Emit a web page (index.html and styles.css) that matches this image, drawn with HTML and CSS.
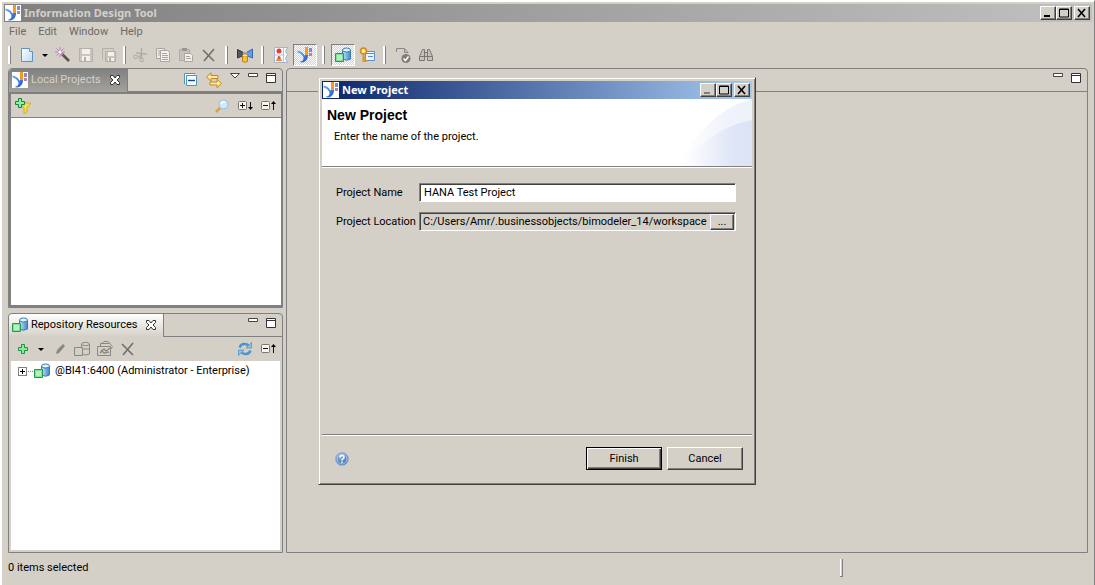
FILE: index.html
```html
<!DOCTYPE html>
<html lang="en">
<head>
    <meta charset="UTF-8">
    <meta name="viewport" content="width=device-width, initial-scale=1.0">
    <title>Information Design Tool</title>
    <link rel="stylesheet" href="styles.css">
</head>
<body>
    <svg class="sprites" aria-hidden="true">
        <defs>
            <linearGradient id="g-blue" x1="0" y1="0" x2="1" y2="0">
                <stop offset="0" stop-color="#c4e4fa"/>
                <stop offset="1" stop-color="#3f86cc"/>
            </linearGradient>
            <linearGradient id="g-page" x1="0" y1="0" x2="1" y2="1">
                <stop offset="0" stop-color="#fff"/>
                <stop offset="1" stop-color="#b9dcf5"/>
            </linearGradient>
            <linearGradient id="g-logo" x1="0" y1="0" x2="1" y2="1">
                <stop offset="0" stop-color="#6fb8f5"/>
                <stop offset="1" stop-color="#1b4fd0"/>
            </linearGradient>
            <radialGradient id="g-help" cx="0.4" cy="0.3" r="0.8">
                <stop offset="0" stop-color="#8fb6e0"/>
                <stop offset="1" stop-color="#2f629f"/>
            </radialGradient>
        </defs>
        <symbol id="i-logo" viewBox="0 0 16 16">
            <path d="M0.500 3.500Q5 4 7.500 8.500L11 6.500Q11.500 12 8 14.500Q5.500 16 2.500 15Q7 14 6.500 10.500Q5 6.500 0.500 5.500z" fill="url(#g-logo)"/>
            <rect x="8" y="0" width="3" height="8" fill="#f39a25"/>
            <rect x="12" y="1" width="3" height="4" fill="#8a86c8"/>
            <rect x="12" y="6" width="3" height="3" fill="#b583a8"/>
        </symbol>
        <symbol id="i-new" viewBox="0 0 16 16">
            <path d="M2.500 1.500h8l3 3v10h-11z" fill="url(#g-page)" stroke="#5b94cb"/>
            <path d="M10.500 1.500v3h3" fill="#fff" stroke="#5b94cb"/>
        </symbol>
        <symbol id="i-wand" viewBox="0 0 16 16">
            <path d="M7 7l7 7" stroke="#55504e" stroke-width="2.600"/>
            <path d="M5 0v10M0 5h10M1.500 1.500l7 7M8.500 1.500l-7 7" stroke="#c57dc0"/>
            <circle cx="5" cy="5" r="1.500" fill="#fff"/>
        </symbol>
        <symbol id="i-save" viewBox="0 0 16 16">
            <path d="M1.500 1.500h13v13h-13z" fill="#c9c6c0" stroke="#b3b0a9"/>
            <path d="M4 2h8v5H4zM4 9h8v5H4z" fill="#f3f1ed"/>
            <path d="M6 10h2v4H6z" fill="#b3b0a9"/>
        </symbol>
        <symbol id="i-saveall" viewBox="0 0 16 16">
            <path d="M4.500 4.500h10v10h-10z" fill="#c9c6c0" stroke="#b3b0a9"/>
            <path d="M1.500 12.500v-11h11v2" fill="none" stroke="#b3b0a9"/>
            <path d="M7 5h6v4H7zM7 11h6v3H7z" fill="#f3f1ed"/>
            <path d="M8 11h2v3H8z" fill="#b3b0a9"/>
        </symbol>
        <symbol id="i-cut" viewBox="0 0 16 16">
            <path d="M9.500 1v8M4 6l11 1M9 8l-3 3M9 9l1 3" stroke="#b0ada6" stroke-width="1.400"/>
            <path d="M2 8l4 1-2 3-2-1zM8 11l3 0 0 4-3-1z" fill="none" stroke="#b0ada6"/>
        </symbol>
        <symbol id="i-copy" viewBox="0 0 16 16">
            <path d="M1.500 1.500h8v10h-8z" fill="#eeece8" stroke="#a9a6a0"/>
            <path d="M5.500 3.500h7l2 2v9h-9z" fill="#f3f1ee" stroke="#a9a6a0"/>
            <path d="M3 4h2M3 6h2M3 8h2M7 6.500h5M7 8.500h6M7 10.500h6M7 12.500h6" stroke="#a9a6a0"/>
        </symbol>
        <symbol id="i-paste" viewBox="0 0 16 16">
            <path d="M1.500 2.500h10v11h-10z" fill="#c5c2bc" stroke="#b0ada6"/>
            <path d="M4 1h5v3H4z" fill="#99968f"/>
            <path d="M6.500 6.500h6l2 2v6h-8z" fill="#f3f1ee" stroke="#a9a6a0"/>
            <path d="M8 9.500h4M8 11.500h5" stroke="#a9a6a0"/>
        </symbol>
        <symbol id="i-x" viewBox="0 0 16 16">
            <path d="M2 3l11 11M13 2L3 14" stroke="#716f6b" stroke-width="1.600" fill="none"/>
        </symbol>
        <symbol id="i-dbs" viewBox="0 0 16 16">
            <path d="M0.500 2.500l6 3v3l-6 2.500z" fill="#555963" stroke="#33363f"/>
            <path d="M9.500 5.500l6-3.500v9l-6-2.500z" fill="#6b9ae4" stroke="#3566ae"/>
            <path d="M6 5h4v4H6z" fill="#9aa6b5"/>
            <path d="M5.500 8.500v6q2.500 1.600 5 0v-6z" fill="#fbc32c" stroke="#b98214"/>
            <ellipse cx="8" cy="8.500" rx="2.500" ry="1.500" fill="#ffe889" stroke="#b98214" stroke-width="0.700"/>
        </symbol>
        <symbol id="i-models" viewBox="0 0 16 16">
            <path d="M1.500 0.500h13l-2 4 2 3-2 4 2 4h-13z" fill="#f8fafd" stroke="#a3b4cc"/>
            <path d="M1.500 8h10M10.500 1v14" stroke="#b9c5d8"/>
            <circle cx="6" cy="4" r="2.500" fill="#df3e3a"/>
            <path d="M2.500 14l3.500-5 3.500 5z" fill="#ee8c3d"/>
            <circle cx="6" cy="10.500" r="1.500" fill="#e1553f"/>
        </symbol>
        <symbol id="i-repo" viewBox="0 0 16 16">
            <path d="M7.500 3v9q4 2.500 8 0V3z" fill="url(#g-blue)" stroke="#3e78ab"/>
            <ellipse cx="11.500" cy="3" rx="4" ry="2" fill="#dff2fd" stroke="#3e78ab"/>
            <path d="M0.500 6.500h8v8h-8z" fill="#7fe096" stroke="#219c4b"/>
            <path d="M2 8h5v5H2z" fill="#b4f0c2"/>
        </symbol>
        <symbol id="i-repo-off" viewBox="0 0 16 16">
            <path d="M7.500 3v10q4 2 8 0V3M8.500 8h7" fill="none" stroke="#8b8882"/>
            <ellipse cx="11.500" cy="3" rx="4" ry="1.600" fill="none" stroke="#8b8882"/>
            <path d="M0.500 6.500h8v8h-8z" fill="#d4d0c8" stroke="#8b8882"/>
        </symbol>
        <symbol id="i-key" viewBox="0 0 16 16">
            <path d="M6.500 4.500h9v9h-9z" fill="#eaf4fd" stroke="#5d90c5"/>
            <path d="M7 6.500h8M9 9.500h5" stroke="#5d90c5"/>
            <circle cx="4.500" cy="4" r="3" fill="#ffd77b" stroke="#d08a26" stroke-width="1.500"/>
            <path d="M4.500 7v8M5 11h2M5 14h3" stroke="#db962b" stroke-width="2"/>
            <circle cx="4.500" cy="4" r="1" fill="#fff"/>
        </symbol>
        <symbol id="i-check" viewBox="0 0 16 16">
            <path d="M1.500 5V1.500h8l3 3.500M9.500 2v3.500h4" fill="none" stroke="#8b8882"/>
            <circle cx="11" cy="11.500" r="4.500" fill="#807d78"/>
            <path d="M8.500 11.500l2 2 3-4" fill="none" stroke="#fff" stroke-width="1.500"/>
        </symbol>
        <symbol id="i-find" viewBox="0 0 16 16">
            <path d="M4.500 2.500h2v3h3v-3h2l3 7v4h-5v-4h-3v4h-5v-4zM1.500 9.500h5M9.500 9.500h5M6.500 5v5M9.500 5v5" fill="#c5c2bc" stroke="#7a7772"/>
        </symbol>
        <symbol id="i-collapse" viewBox="0 0 16 16">
            <path d="M1.500 12V1.500H12M3.500 3.500h10v10h-10z" fill="#f4fafe" stroke="#5691b9"/>
            <path d="M5 8.500h7" stroke="#174b85" stroke-width="1.400"/>
        </symbol>
        <symbol id="i-link" viewBox="0 0 16 16">
            <path d="M0.500 5L5 0.800v2.700h7v3H5v2.700zM15.500 11.500L11 7.300V10H4v3h7v2.700z" fill="#ffe8a0" stroke="#c18923"/>
        </symbol>
        <symbol id="i-filter" viewBox="0 0 16 16">
            <path d="M5 5h11l-4 5v4l-3 2v-6z" fill="#f5e04a" stroke="#cfae25"/>
            <path d="M3.500 0.500h3v3h3v3h-3v3h-3v-3h-3v-3h3z" fill="#8ff0a0" stroke="#15823d"/>
        </symbol>
        <symbol id="i-search" viewBox="0 0 16 16">
            <path d="M6 10l-4 4" stroke="#dba04c" stroke-width="2.500"/>
            <circle cx="9.500" cy="6.500" r="4.500" fill="#cfeaff" stroke="#8fbce4"/>
            <path d="M7 6q1-3 4-2" fill="none" stroke="#fff" stroke-width="1.500"/>
        </symbol>
        <symbol id="i-expand" viewBox="0 0 16 16">
            <rect x="1.500" y="3.500" width="8" height="8" rx="1" fill="#f6f4ef" stroke="#77756f"/>
            <path d="M3 7.500h5M5.500 5v5M13.500 4v7" stroke="#111"/>
            <path d="M11 9h5l-2.500 3z"/>
        </symbol>
        <symbol id="i-shrink" viewBox="0 0 16 16">
            <rect x="1.500" y="3.500" width="8" height="8" rx="1" fill="#f6f4ef" stroke="#77756f"/>
            <path d="M3 7.500h5M13.500 5v7" stroke="#111"/>
            <path d="M11 6h5l-2.500-3z"/>
        </symbol>
        <symbol id="i-add" viewBox="0 0 16 16">
            <path d="M6.500 3.500h3v3h3v3h-3v3h-3v-3h-3v-3h3z" fill="#86eb9b" stroke="#1d9346"/>
        </symbol>
        <symbol id="i-pencil" viewBox="0 0 16 16">
            <path d="M4 13l1-4 6-6 2 2-6 7z" fill="#8b8882"/>
        </symbol>
        <symbol id="i-case" viewBox="0 0 16 16">
            <path d="M0.500 5.500h13v9h-13zM3.500 5.500v-3h9l3 3-2 3M5 2.500l2-2h4l2 2" fill="none" stroke="#8b8882"/>
            <path d="M3 12l4-4 2 2 4-3M4 9l3 3 5-1" fill="none" stroke="#8b8882" stroke-width="1.300"/>
        </symbol>
        <symbol id="i-refresh" viewBox="0 0 16 16">
            <path d="M2.500 6.500Q4 2.500 8 3q2 0 4 2M13.500 9.500Q12 13.500 8 13q-2 0-4-2" fill="none" stroke="#4b94d0" stroke-width="2.400"/>
            <path d="M9 7h5.500V1.500zM7 9H1.500v5.500z" fill="#8ac4ec" stroke="#4b94d0" stroke-width="0.800"/>
        </symbol>
        <symbol id="i-close" viewBox="0 0 12 12">
            <path d="M1.500 1.500h2.500l2 2.500 2-2.500h2.500v2l-2.500 2.500 2.500 2.500v2h-2.500l-2-2.500-2 2.500h-2.500v-2l2.500-2.500-2.500-2.500z" fill="#fff" stroke="#333"/>
        </symbol>
        <symbol id="i-menu" viewBox="0 0 12 12">
            <path d="M1.500 1.500h9L6 6z" fill="#fff" stroke="#444"/>
        </symbol>
        <symbol id="i-min" viewBox="0 0 12 12">
            <path d="M1.500 1.500h9v3h-9z" fill="#fff" stroke="#444"/>
        </symbol>
        <symbol id="i-max" viewBox="0 0 12 12">
            <path d="M1.500 1.500h9v9h-9zM1.500 3.500h9" fill="#fff" stroke="#333"/>
        </symbol>
        <symbol id="w-min" viewBox="0 0 12 10"><path d="M2 7h6v2H2z"/></symbol>
        <symbol id="w-max" viewBox="0 0 12 10"><path d="M1.500 1h9v8h-9zM1 1.500h10" fill="none" stroke="currentColor"/></symbol>
        <symbol id="w-close" viewBox="0 0 12 10"><path d="M2 1l7 8M9 1L2 9" stroke="currentColor" stroke-width="1.600"/></symbol>
        <symbol id="i-help" viewBox="0 0 16 16">
            <circle cx="8" cy="8" r="6.500" fill="url(#g-help)" stroke="#9cb5d1"/>
            <circle cx="8" cy="8" r="5" fill="none" stroke="#c9dbee" stroke-width="0.800"/>
            <path d="M6 6.500q0-2 2-2t2 1.800q0 1-1 1.500T8 9.500M8 10.500v1.500" fill="none" stroke="#fff" stroke-width="1.500"/>
        </symbol>
    </svg>

    <div class="window">
        <header class="titlebar">
            <svg class="icon logo"><use href="#i-logo"/></svg>
            <h1>Information Design Tool</h1>
            <div class="caption-buttons">
                <button aria-label="Minimize"><svg><use href="#w-min"/></svg></button>
                <button aria-label="Maximize"><svg><use href="#w-max"/></svg></button>
                <button aria-label="Close"><svg><use href="#w-close"/></svg></button>
            </div>
        </header>

        <nav class="menubar">
            <button>File</button>
            <button>Edit</button>
            <button>Window</button>
            <button>Help</button>
        </nav>

        <div class="toolbar">
            <span class="sep first"></span>
            <button class="tool" aria-label="New"><svg class="icon"><use href="#i-new"/></svg></button>
            <button class="drop" aria-label="New options"></button>
            <button class="tool" aria-label="Wizard"><svg class="icon"><use href="#i-wand"/></svg></button>
            <button class="tool" aria-label="Save"><svg class="icon"><use href="#i-save"/></svg></button>
            <button class="tool" aria-label="Save all"><svg class="icon"><use href="#i-saveall"/></svg></button>
            <span class="sep small"></span>
            <button class="tool" aria-label="Cut"><svg class="icon"><use href="#i-cut"/></svg></button>
            <button class="tool" aria-label="Copy"><svg class="icon"><use href="#i-copy"/></svg></button>
            <button class="tool" aria-label="Paste"><svg class="icon"><use href="#i-paste"/></svg></button>
            <button class="tool" aria-label="Delete"><svg class="icon"><use href="#i-x"/></svg></button>
            <span class="sep"></span>
            <button class="tool" aria-label="Sources"><svg class="icon"><use href="#i-dbs"/></svg></button>
            <span class="sep"></span>
            <button class="tool" aria-label="Models"><svg class="icon"><use href="#i-models"/></svg></button>
            <button class="tool pressed" aria-label="Local projects"><svg class="icon"><use href="#i-logo"/></svg></button>
            <span class="sep"></span>
            <button class="tool pressed" aria-label="Repository resources"><svg class="icon"><use href="#i-repo"/></svg></button>
            <button class="tool" aria-label="Security"><svg class="icon"><use href="#i-key"/></svg></button>
            <span class="sep"></span>
            <button class="tool" aria-label="Check integrity"><svg class="icon"><use href="#i-check"/></svg></button>
            <button class="tool" aria-label="Find"><svg class="icon"><use href="#i-find"/></svg></button>
        </div>

        <main class="workbench">
            <div class="side">
                <section class="view active">
                    <div class="view-head">
                        <div class="tab">
                            <svg class="icon logo"><use href="#i-logo"/></svg>
                            <h2>Local Projects</h2>
                            <button class="mini" aria-label="Close view"><svg><use href="#i-close"/></svg></button>
                        </div>
                        <div class="view-tools">
                            <button class="tool" aria-label="Collapse all"><svg class="icon"><use href="#i-collapse"/></svg></button>
                            <button class="tool" aria-label="Link"><svg class="icon"><use href="#i-link"/></svg></button>
                            <div class="mini-buttons">
                                <button class="mini" aria-label="View menu"><svg><use href="#i-menu"/></svg></button>
                                <button class="mini" aria-label="Minimize view"><svg><use href="#i-min"/></svg></button>
                                <button class="mini" aria-label="Maximize view"><svg><use href="#i-max"/></svg></button>
                            </div>
                        </div>
                    </div>
                    <div class="view-body">
                        <div class="view-bar">
                            <button class="tool" aria-label="Add filter"><svg class="icon"><use href="#i-filter"/></svg></button>
                            <span class="space"></span>
                            <button class="tool" aria-label="Search"><svg class="icon"><use href="#i-search"/></svg></button>
                            <button class="tool" aria-label="Expand"><svg class="icon"><use href="#i-expand"/></svg></button>
                            <button class="tool" aria-label="Collapse"><svg class="icon"><use href="#i-shrink"/></svg></button>
                        </div>
                        <div class="content"></div>
                    </div>
                </section>

                <section class="view">
                    <div class="view-head">
                        <div class="tab">
                            <svg class="icon"><use href="#i-repo"/></svg>
                            <h2>Repository Resources</h2>
                            <button class="mini" aria-label="Close view"><svg><use href="#i-close"/></svg></button>
                        </div>
                        <div class="view-tools">
                            <div class="mini-buttons">
                                <button class="mini" aria-label="Minimize view"><svg><use href="#i-min"/></svg></button>
                                <button class="mini" aria-label="Maximize view"><svg><use href="#i-max"/></svg></button>
                            </div>
                        </div>
                    </div>
                    <div class="view-body">
                        <div class="view-bar">
                            <button class="tool" aria-label="Add"><svg class="icon"><use href="#i-add"/></svg></button>
                            <button class="drop" aria-label="Add options"></button>
                            <button class="tool pencil" aria-label="Edit"><svg class="icon"><use href="#i-pencil"/></svg></button>
                            <button class="tool" aria-label="Open session"><svg class="icon"><use href="#i-repo-off"/></svg></button>
                            <button class="tool" aria-label="Retrieve"><svg class="icon"><use href="#i-case"/></svg></button>
                            <button class="tool" aria-label="Delete"><svg class="icon"><use href="#i-x"/></svg></button>
                            <span class="space"></span>
                            <button class="tool" aria-label="Refresh"><svg class="icon"><use href="#i-refresh"/></svg></button>
                            <button class="tool" aria-label="Collapse"><svg class="icon"><use href="#i-shrink"/></svg></button>
                        </div>
                        <ul class="content tree">
                            <li>
                                <button class="twisty" aria-label="Expand"></button>
                                <svg class="icon"><use href="#i-repo"/></svg>
                                <span>@BI41:6400 (Administrator - Enterprise)</span>
                            </li>
                        </ul>
                    </div>
                </section>
            </div>

            <section class="editor">
                <div class="view-head">
                    <div class="view-tools">
                        <div class="mini-buttons">
                            <button class="mini" aria-label="Minimize editor"><svg><use href="#i-min"/></svg></button>
                            <button class="mini" aria-label="Maximize editor"><svg><use href="#i-max"/></svg></button>
                        </div>
                    </div>
                </div>
            </section>
        </main>

        <footer class="statusbar">
            <span class="status-text">0 items selected</span>
            <span class="status-sep"></span>
        </footer>
    </div>

    <form class="dialog" role="dialog" aria-labelledby="dialog-title">
        <div class="titlebar">
            <svg class="icon logo"><use href="#i-logo"/></svg>
            <h2 id="dialog-title">New Project</h2>
            <div class="caption-buttons">
                <button type="button" aria-label="Minimize" class="off"><svg><use href="#w-min"/></svg></button>
                <button type="button" aria-label="Maximize"><svg><use href="#w-max"/></svg></button>
                <button type="button" aria-label="Close"><svg><use href="#w-close"/></svg></button>
            </div>
        </div>
        <div class="banner">
            <div class="banner-text">
                <h3>New Project</h3>
                <p>Enter the name of the project.</p>
            </div>
            <svg class="swoosh" viewBox="0 0 72 67" aria-hidden="true">
                <defs>
                    <linearGradient id="g-swoosh" x1="0" y1="0" x2="1" y2="0">
                        <stop offset="0" stop-color="#fff"/>
                        <stop offset="0.700" stop-color="#dfe6f7"/>
                        <stop offset="1" stop-color="#dbe3f6"/>
                    </linearGradient>
                </defs>
                <path d="M0 67Q26 12 72 0v67z" fill="url(#g-swoosh)" opacity="0.500"/>
                <path d="M4 67Q28 30 72 21v46z" fill="url(#g-swoosh)"/>
            </svg>
        </div>
        <div class="fields">
            <label for="project-name">Project Name</label>
            <input type="text" id="project-name" value="HANA Test Project">
            <label for="project-location">Project Location</label>
            <div class="location">
                <input type="text" id="project-location" value="C:/Users/Amr/.businessobjects/bimodeler_14/workspace" readonly>
                <button type="button" aria-label="Browse">...</button>
            </div>
        </div>
        <div class="dialog-footer">
            <button type="button" class="help" aria-label="Help"><svg class="icon"><use href="#i-help"/></svg></button>
            <button type="button" class="push default">Finish</button>
            <button type="button" class="push">Cancel</button>
        </div>
    </form>
</body>
</html>
```

FILE: styles.css
```css
*, *::before {
    box-sizing: border-box;
}

body {
    margin: 0;
    background: #d4d0c8;
    color: #000;
    font-family: Tahoma, Roboto, sans-serif;
    font-size: 11px;
    line-height: 14px;
}

h1, h2, h3, p, ul {
    margin: 0;
    padding: 0;
    font-size: 11px;
}

button, input {
    font: inherit;
    color: inherit;
    margin: 0;
    padding: 0;
    border: 0;
    border-radius: 0;
    background: none;
}

svg {
    display: block;
}

.sprites {
    position: absolute;
    width: 0;
    height: 0;
}

.icon {
    width: 16px;
    height: 16px;
    flex: none;
}

.logo {
    background: #fff;
}

/* main window */
.window {
    display: flex;
    flex-direction: column;
    min-height: 100vh;
    padding: 2px 2px 0 2px;
    border: solid #fff;
    border-width: 1px 1px 0 2px;
    border-right-color: #808080;
    box-shadow: inset 0 1px #fff;
}

.titlebar {
    display: flex;
    align-items: center;
    gap: 3px;
    height: 18px;
    margin-top: 1px;
    padding: 0 2px 0 1px;
    background: linear-gradient(to right, #808080, #c0c0c0);
    color: #d4d0c8;
}

.titlebar h1, .titlebar h2 {
    flex: 1;
    font-family: Tahoma, "Noto Sans", sans-serif;
    font-weight: bold;
}

.caption-buttons {
    display: flex;
}

.caption-buttons button {
    width: 16px;
    height: 14px;
    padding: 1px;
    background: #d4d0c8;
    color: #000;
    border: 1px solid;
    border-color: #fff #404040 #404040 #fff;
    box-shadow: inset -1px -1px #808080;
}

.caption-buttons button:last-child {
    margin-left: 2px;
}

.caption-buttons svg {
    width: 12px;
    height: 10px;
}

.caption-buttons .off {
    color: #808080;
    fill: #808080;
}

.menubar {
    display: flex;
    gap: 12px;
    height: 20px;
    padding-left: 5px;
    color: #6b6965;
}

.toolbar {
    display: flex;
    align-items: center;
    height: 26px;
    padding-left: 4px;
}

.tool {
    display: flex;
    align-items: center;
    justify-content: center;
    width: 23px;
    height: 22px;
    flex: none;
}

.pressed {
    width: 24px;
    margin-left: 1px;
    border: 1px solid;
    border-color: #808080 #fff #fff #808080;
    background: repeating-conic-gradient(#fff 0 25%, #d4d0c8 0 50%) 0 0 / 2px 2px;
}

.drop {
    width: 13px;
    height: 22px;
}

.drop::before {
    content: "";
    display: block;
    width: 6px;
    margin: 0 auto;
    border: solid transparent;
    border-width: 3px 3px 0 3px;
    border-top-color: #000;
}

.sep {
    display: flex;
    justify-content: center;
    width: 13px;
}

.sep.first {
    width: 7px;
    justify-content: flex-start;
}

.sep.small {
    width: 8px;
}

.sep::before {
    content: "";
    width: 3px;
    height: 18px;
    background: #fff;
    border-right: 1px solid #808080;
}

/* views */
.workbench {
    flex: 1;
    display: flex;
    gap: 3px;
    padding: 0 4px 0 4px;
}

.side {
    display: flex;
    flex-direction: column;
    gap: 5px;
    width: 275px;
}

.view {
    flex: 1;
    display: flex;
    flex-direction: column;
    border: 1px solid #808080;
    border-radius: 4px 4px 0 0;
}

.view-head {
    display: flex;
    justify-content: space-between;
    height: 23px;
    border-bottom: 1px solid #808080;
}

.tab {
    display: flex;
    align-items: center;
    gap: 3px;
    height: 23px;
    padding: 0 6px 1px 3px;
    border-right: 1px solid #808080;
    border-radius: 4px 0 0 0;
    background: linear-gradient(#fff, #d4d0c8);
}

.tab h2 {
    font-weight: normal;
}

.tab .mini {
    margin-left: 5px;
}

.active .tab {
    background: linear-gradient(#808080, #a5a29c);
    color: #d4d0c8;
}

.view-tools {
    display: flex;
    margin-left: auto;
    padding-right: 5px;
}

.mini-buttons {
    display: flex;
    gap: 6px;
    margin-left: 4px;
    padding-top: 3px;
}

.mini, .mini svg {
    width: 12px;
    height: 12px;
}

.view-body {
    flex: 1;
    display: flex;
    flex-direction: column;
    padding: 0 2px 2px 2px;
}

.active .view-body {
    border: 2px solid #808080;
    border-right-width: 1px;
    padding: 0;
}

.view-bar {
    display: flex;
    align-items: center;
    height: 24px;
    padding-right: 1px;
}

.active .view-bar {
    padding-right: 2px;
    border-bottom: 1px solid #808080;
}

.space {
    flex: 1;
}

.pencil {
    margin-left: 3px;
    width: 20px;
}

.content {
    flex: 1;
    background: #fff;
}

.tree {
    list-style: none;
}

.tree li {
    display: flex;
    align-items: center;
    height: 20px;
    padding-left: 7px;
}

.tree .icon {
    margin: 0 5px 0 7px;
}

.twisty {
    position: relative;
    width: 9px;
    height: 9px;
    border: 1px solid #808080;
    background:
        linear-gradient(#000, #000) center / 5px 1px no-repeat,
        linear-gradient(#000, #000) center / 1px 5px no-repeat;
}

.twisty::before {
    content: "";
    position: absolute;
    left: 9px;
    top: 3px;
    width: 5px;
    border-top: 1px dotted #808080;
}

.editor {
    flex: 1;
    border: 1px solid #808080;
    border-radius: 4px 4px 0 0;
}

.statusbar {
    display: flex;
    align-items: center;
    height: 32px;
    padding: 0 0 2px 4px;
}

.status-text {
    flex: 1;
}

.status-sep {
    width: 3px;
    height: 18px;
    margin-right: 249px;
    border: solid #808080;
    border-width: 0 1px 1px 0;
    box-shadow: inset 1px 0 #fff;
}

/* wizard dialog */
.dialog {
    position: absolute;
    left: 318px;
    top: 77px;
    width: 438px;
    height: 408px;
    display: flex;
    flex-direction: column;
    padding: 3px 3px 2px 3px;
    background: #d4d0c8;
    border: 1px solid;
    border-color: #d4d0c8 #404040 #404040 #d4d0c8;
    box-shadow: inset 1px 1px #fff, inset -1px -1px #808080;
}

.dialog .titlebar {
    background: linear-gradient(to right, #0a246a, #a6caf0);
    color: #fff;
    margin: 0;
}

.banner {
    display: flex;
    justify-content: space-between;
    height: 68px;
    background: #fff;
    border-bottom: 1px solid #808080;
    box-shadow: 0 1px #fff;
}

.banner-text {
    padding: 8px 0 0 5px;
}

.banner h3 {
    font-family: Arial, "Liberation Sans", sans-serif;
    font-size: 14px;
    line-height: 16px;
}

.banner p {
    margin: 7px 0 0 7px;
}

.swoosh {
    width: 72px;
    height: 67px;
}

.fields {
    flex: 1;
    display: grid;
    grid-template-columns: 78px 1fr;
    grid-auto-rows: 19px;
    align-items: center;
    gap: 10px 5px;
    padding: 16px 16px 0 14px;
}

.fields label {
    white-space: nowrap;
}

.fields > input, .location {
    width: 100%;
    height: 19px;
    border: 1px solid;
    border-color: #808080 #fff #fff #808080;
    box-shadow: inset 1px 1px #404040;
}

.fields > input {
    padding: 0 4px;
    background: #fff;
}

.location {
    display: flex;
    padding: 1px 1px 0 1px;
}

.location input {
    flex: 1;
    min-width: 0;
    padding-left: 2px;
}

.location button {
    width: 24px;
    line-height: 12px;
}

.location button, .push {
    border: 1px solid;
    border-color: #fff #404040 #404040 #fff;
    box-shadow: inset -1px -1px #808080;
    background: #d4d0c8;
}

.dialog-footer {
    display: flex;
    align-items: center;
    gap: 5px;
    height: 48px;
    padding: 0 9px 0 12px;
    border-top: 1px solid #808080;
    box-shadow: inset 0 1px #fff;
}

.help {
    margin-right: auto;
}

.push {
    width: 76px;
    height: 23px;
}

.push.default {
    border-color: #000;
    box-shadow: inset 1px 1px #fff, inset -1px -1px #404040, inset -2px -2px #808080;
}
```
